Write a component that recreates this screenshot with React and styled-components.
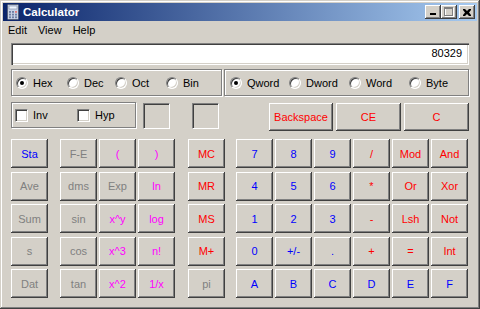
import React from "react";
import styled, { createGlobalStyle } from "styled-components";

const Global = createGlobalStyle`
  html, body {
    margin: 0;
    padding: 0;
    background: #d4d0c8;
  }
  * {
    box-sizing: border-box;
  }
`;

const FONT = `"Liberation Sans", Arial, sans-serif`;

const COLORS = {
  b: "#0000ff",
  g: "#808080",
  m: "#ff00ff",
  r: "#ff0000",
};

const Window = styled.div`
  width: 480px;
  height: 309px;
  padding: 3px;
  background: #d4d0c8;
  box-shadow: inset -1px -1px #404040, inset 1px 1px #d4d0c8,
    inset -2px -2px #808080, inset 2px 2px #ffffff;
  display: flex;
  flex-direction: column;
  font: 11px ${FONT};
  color: #000;
  overflow: hidden;
`;

const TitleBar = styled.div`
  height: 18px;
  flex: none;
  display: flex;
  align-items: center;
  padding: 0 2px 0 2px;
  background: linear-gradient(to right, #0a246a, #a6caf0);
`;

const Title = styled.span`
  flex: 1;
  margin-left: 2px;
  color: #fff;
  font: bold 11.5px ${FONT};
`;

const CapButton = styled.div`
  width: 16px;
  height: 14px;
  margin-left: ${(p) => p.$gap || 0}px;
  background: #d4d0c8;
  box-shadow: inset -1px -1px #404040, inset 1px 1px #ffffff,
    inset -2px -2px #808080;
  display: flex;
  align-items: center;
  justify-content: center;
`;

const MenuBar = styled.div`
  height: 19px;
  flex: none;
  display: flex;
  align-items: center;
  padding-left: 2px;
`;

const MenuItem = styled.span`
  padding: 0 8px 0 3px;
  line-height: 17px;
`;

const Content = styled.div`
  flex: 1;
  padding: 3px 8px 0 8px;
  display: flex;
  flex-direction: column;
`;

const Display = styled.div`
  height: 22px;
  width: 458px;
  background: #fff;
  box-shadow: inset 1px 1px #808080, inset 2px 2px #404040,
    inset -1px -1px #ffffff, inset -2px -2px #d4d0c8;
  text-align: right;
  padding: 0 7px 0 4px;
  line-height: 21px;
`;

const Row = styled.div`
  display: flex;
  align-items: flex-start;
  margin-top: ${(p) => p.$mt || 0}px;
`;

const GroupBox = styled.div`
  width: ${(p) => p.$w}px;
  height: ${(p) => p.$h}px;
  margin-left: ${(p) => p.$ml || 0}px;
  border: 1px solid #808080;
  box-shadow: inset 1px 1px #ffffff, 1px 1px #ffffff;
  display: flex;
  align-items: center;
  padding-left: ${(p) => p.$pl || 4}px;
`;

const Option = styled.label`
  display: flex;
  align-items: center;
  width: ${(p) => (p.$w ? `${p.$w}px` : "auto")};
  flex: none;
  white-space: nowrap;
`;

const RadioDot = styled.span`
  position: relative;
  width: 12px;
  height: 12px;
  flex: none;
  margin-right: 5px;
  border-radius: 50%;
  border: 1px solid;
  border-color: #808080 #ffffff #ffffff #808080;
  background: #fff;
  box-shadow: inset 1px 1px #404040, inset -1px -1px #d4d0c8;

  &::after {
    content: "";
    display: ${(p) => (p.$on ? "block" : "none")};
    position: absolute;
    left: 3px;
    top: 3px;
    width: 4px;
    height: 4px;
    border-radius: 50%;
    background: #000;
  }
`;

const CheckBox = styled.span`
  width: 13px;
  height: 13px;
  flex: none;
  margin-right: 5px;
  border: 1px solid;
  border-color: #808080 #ffffff #ffffff #808080;
  background: #fff;
  box-shadow: inset 1px 1px #404040, inset -1px -1px #d4d0c8;
`;

const Sunken = styled.div`
  width: 27px;
  height: 26px;
  margin-top: 1px;
  margin-left: ${(p) => p.$ml || 0}px;
  border: 1px solid;
  border-color: #808080 #ffffff #ffffff #808080;
  box-shadow: inset 1px 1px #404040;
`;

const Key = styled.button`
  width: ${(p) => p.$w || 37}px;
  height: ${(p) => p.$h || 29}px;
  margin: ${(p) => p.$m || 0};
  padding: 0;
  border: none;
  background: #d4d0c8;
  box-shadow: inset -1px -1px #404040, inset 1px 1px #ffffff,
    inset -2px -2px #808080;
  color: ${(p) => COLORS[p.$c]};
  font: 11px ${FONT};
  text-align: center;
  cursor: default;
`;

const Keypad = styled.div`
  display: flex;
  margin-top: 8px;
`;

const KeyGroup = styled.div`
  display: grid;
  grid-template-columns: repeat(${(p) => p.$cols}, 37px);
  grid-template-rows: repeat(5, 29px);
  column-gap: 2px;
  row-gap: 3.5px;
  margin-left: ${(p) => p.$ml || 0}px;
`;

const CalcIcon = () => (
  <svg width="16" height="16" viewBox="0 0 16 16">
    <rect x="2.5" y="0.5" width="11" height="15" rx="1" fill="#c9d3e6" stroke="#55607a" />
    <rect x="4" y="2" width="8" height="3" fill="#eef6ff" stroke="#7d8aa6" strokeWidth="0.6" />
    {[0, 1, 2].map((r) =>
      [0, 1, 2].map((c) => (
        <rect
          key={`${r}-${c}`}
          x={4 + c * 3}
          y={7 + r * 2.7}
          width="2"
          height="1.8"
          fill={c === 2 && r === 0 ? "#e07a7a" : "#6f7fa3"}
        />
      ))
    )}
  </svg>
);

const statKeys = [
  ["Sta", "b"],
  ["Ave", "g"],
  ["Sum", "g"],
  ["s", "g"],
  ["Dat", "g"],
];

const funcKeys = [
  ["F-E", "g"], ["(", "m"], [")", "m"],
  ["dms", "g"], ["Exp", "g"], ["ln", "m"],
  ["sin", "g"], ["x^y", "m"], ["log", "m"],
  ["cos", "g"], ["x^3", "m"], ["n!", "m"],
  ["tan", "g"], ["x^2", "m"], ["1/x", "m"],
];

const memKeys = [
  ["MC", "r"],
  ["MR", "r"],
  ["MS", "r"],
  ["M+", "r"],
  ["pi", "g"],
];

const numKeys = [
  ["7", "b"], ["8", "b"], ["9", "b"], ["/", "r"], ["Mod", "r"], ["And", "r"],
  ["4", "b"], ["5", "b"], ["6", "b"], ["*", "r"], ["Or", "r"], ["Xor", "r"],
  ["1", "b"], ["2", "b"], ["3", "b"], ["-", "r"], ["Lsh", "r"], ["Not", "r"],
  ["0", "b"], ["+/-", "b"], [".", "b"], ["+", "r"], ["=", "r"], ["Int", "r"],
  ["A", "b"], ["B", "b"], ["C", "b"], ["D", "b"], ["E", "b"], ["F", "b"],
];

const bases = [
  ["Hex", 51, true],
  ["Dec", 48],
  ["Oct", 51],
  ["Bin"],
];

const words = [
  ["Qword", 59, true],
  ["Dword", 60],
  ["Word", 60],
  ["Byte"],
];

const renderKeys = (keys) =>
  keys.map(([label, c]) => (
    <Key key={label} $c={c}>
      {label}
    </Key>
  ));

export default function App() {
  return (
    <>
      <Global />
      <Window>
        <TitleBar>
          <CalcIcon />
          <Title>Calculator</Title>
          <CapButton>
            <svg width="8" height="8" viewBox="0 0 8 8">
              <rect x="1" y="5" width="6" height="2" fill="#000" />
            </svg>
          </CapButton>
          <CapButton>
            <svg width="10" height="10" viewBox="0 0 10 10">
              <rect x="1.5" y="1.5" width="8" height="8" fill="none" stroke="#ffffff" />
              <rect x="0.5" y="0.5" width="8" height="8" fill="none" stroke="#808080" />
              <rect x="0.5" y="1" width="8" height="1" fill="#808080" />
            </svg>
          </CapButton>
          <CapButton $gap={2}>
            <svg width="8" height="7" viewBox="0 0 8 7">
              <path
                d="M0 0h2l2 2 2-2h2v1L6 3.5 8 6v1H6L4 5 2 7H0V6l2-2.5L0 1z"
                fill="#000"
              />
            </svg>
          </CapButton>
        </TitleBar>

        <MenuBar>
          <MenuItem>Edit</MenuItem>
          <MenuItem>View</MenuItem>
          <MenuItem>Help</MenuItem>
        </MenuBar>

        <Content>
          <Display>80329</Display>

          <Row $mt={4}>
            <GroupBox $w={211} $h={27} $pl={4}>
              {bases.map(([label, w, on]) => (
                <Option key={label} $w={w}>
                  <RadioDot $on={on} />
                  {label}
                </Option>
              ))}
            </GroupBox>
            <GroupBox $w={245} $h={27} $ml={2} $pl={5}>
              {words.map(([label, w, on]) => (
                <Option key={label} $w={w}>
                  <RadioDot $on={on} />
                  {label}
                </Option>
              ))}
            </GroupBox>
          </Row>

          <Row $mt={6}>
            <GroupBox $w={125} $h={26} $pl={3}>
              <Option $w={62}>
                <CheckBox />
                Inv
              </Option>
              <Option>
                <CheckBox />
                Hyp
              </Option>
            </GroupBox>
            <Sunken $ml={7} />
            <Sunken $ml={22} />
            <Key $c="r" $w={64} $h={28} $m="1px 0 0 50px">
              Backspace
            </Key>
            <Key $c="r" $w={65} $h={28} $m="1px 0 0 3px">
              CE
            </Key>
            <Key $c="r" $w={65} $h={28} $m="1px 0 0 3px">
              C
            </Key>
          </Row>

          <Keypad>
            <KeyGroup $cols={1}>{renderKeys(statKeys)}</KeyGroup>
            <KeyGroup $cols={3} $ml={12}>
              {renderKeys(funcKeys)}
            </KeyGroup>
            <KeyGroup $cols={1} $ml={13}>
              {renderKeys(memKeys)}
            </KeyGroup>
            <KeyGroup $cols={6} $ml={11}>
              {renderKeys(numKeys)}
            </KeyGroup>
          </Keypad>
        </Content>
      </Window>
    </>
  );
}
